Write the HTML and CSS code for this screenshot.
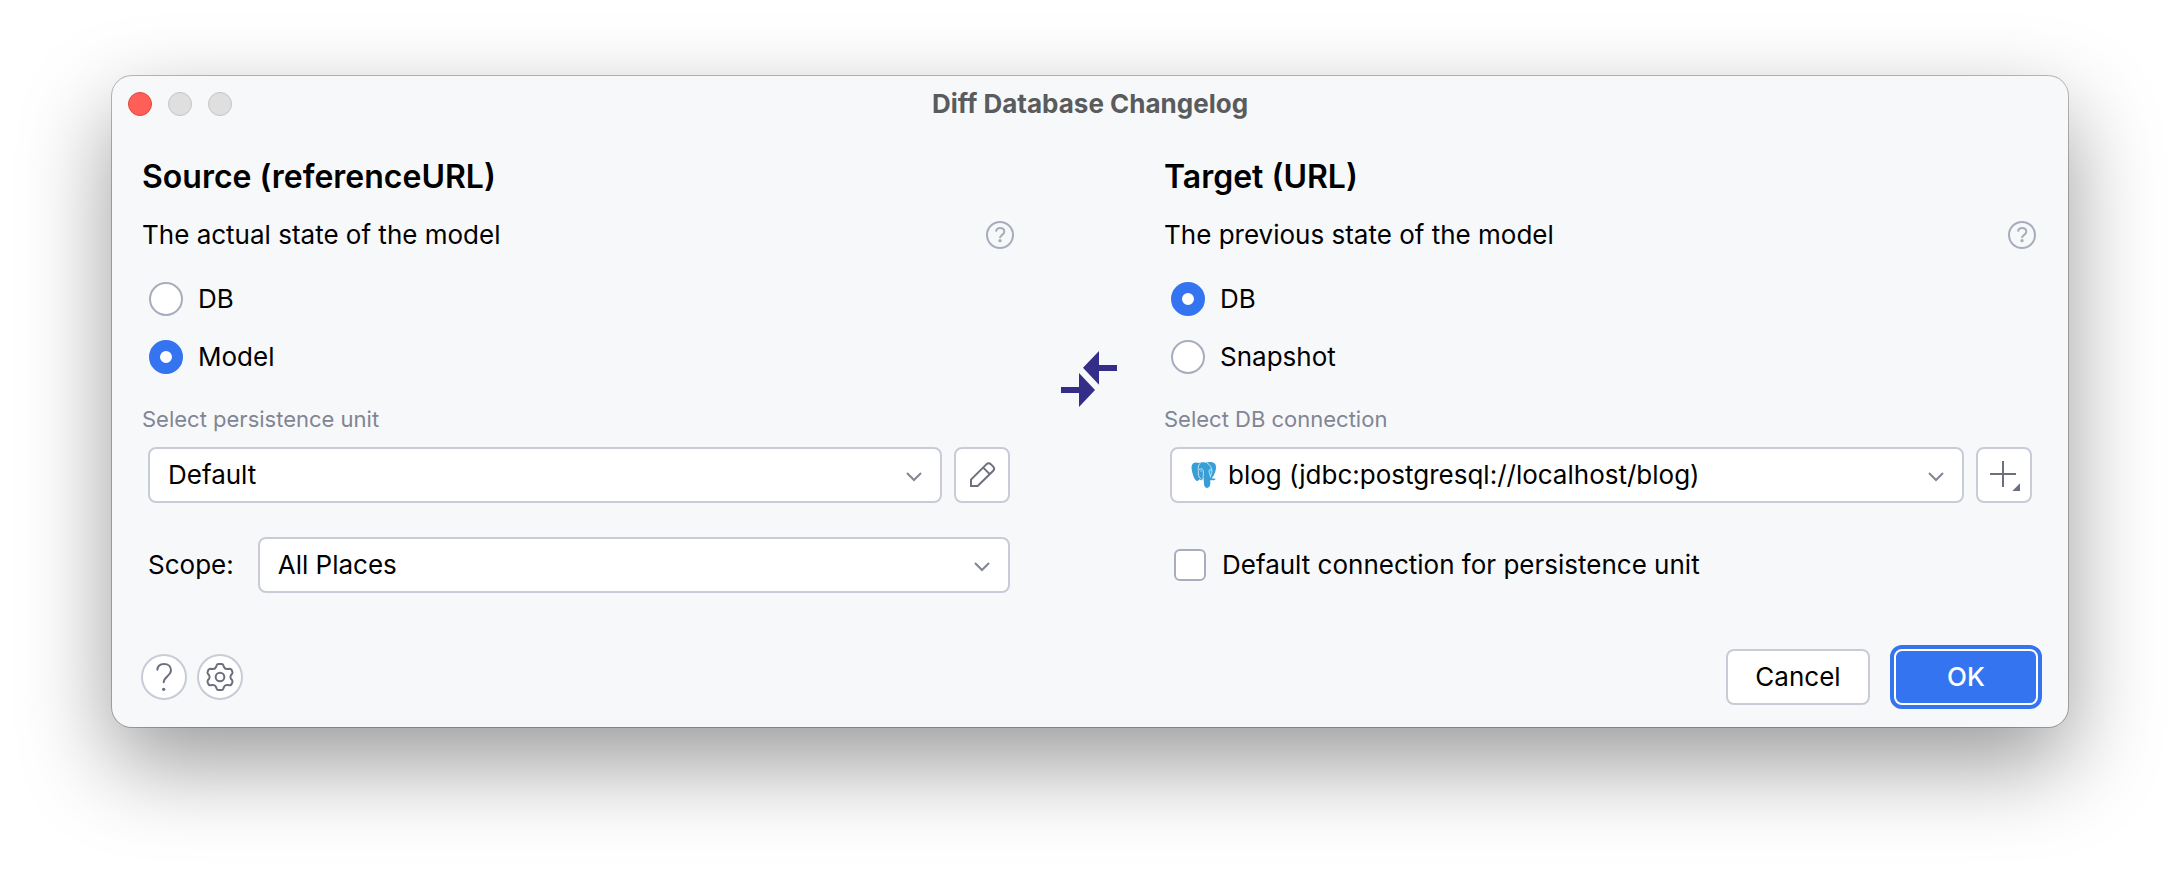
FILE: index.html
```html
<!DOCTYPE html>
<html lang="en">
<head>
<meta charset="utf-8">
<title>Diff Database Changelog</title>
<link rel="stylesheet" href="styles.css">
</head>
<body>
<main class="dialog" role="dialog" aria-labelledby="dialog-title">
  <header class="titlebar">
    <div class="lights">
      <button class="light light-close" type="button" aria-label="Close"></button>
      <button class="light" type="button" aria-label="Minimize" disabled></button>
      <button class="light" type="button" aria-label="Zoom" disabled></button>
    </div>
    <h1 class="title" id="dialog-title">Diff Database Changelog</h1>
  </header>

  <form class="form">
    <div class="columns">
      <section class="column">
        <h2 class="heading">Source (referenceURL)</h2>
        <div class="description">
          <p class="text">The actual state of the model</p>
          <button class="hint" type="button" aria-label="About the source">
            <svg class="hint-icon" viewBox="378 59 84 84" aria-hidden="true"><circle cx="420" cy="101" r="39"/><path d="M408 91C409 83 414 80 420 80C428 80 433 85 433 91C433 100 420 101 420 110"/><circle class="dot" cx="420" cy="118" r="5"/></svg>
          </button>
        </div>
        <div class="radios">
          <label class="choice"><input class="radio" type="radio" name="source">DB</label>
          <label class="choice"><input class="radio" type="radio" name="source" checked>Model</label>
        </div>
        <label class="caption" for="unit">Select persistence unit</label>
        <div class="row">
          <div class="combo">
            <select class="select" id="unit"><option>Default</option></select>
            <svg class="chevron" viewBox="0 0 16 10" aria-hidden="true"><path d="M1 1l7 7 7-7"/></svg>
          </div>
          <button class="square" type="button" aria-label="Edit persistence unit">
            <svg class="pencil" viewBox="324 780 84 84" aria-hidden="true"><path d="M333 855V836L379 790Q386 783 393 790L399 796Q406 803 399 810L353 855ZM369 799L390 820"/></svg>
          </button>
        </div>
        <div class="row row-scope">
          <label class="text" for="scope">Scope:</label>
          <div class="combo">
            <select class="select" id="scope"><option>All Places</option></select>
            <svg class="chevron" viewBox="0 0 16 10" aria-hidden="true"><path d="M1 1l7 7 7-7"/></svg>
          </div>
        </div>
      </section>

      <svg class="arrows" viewBox="606 450 168 168" aria-hidden="true"><path d="M672 500L720 450V492H774V510H720V551ZM606 558H660V516L708 567L660 618V576H606Z"/></svg>

      <section class="column">
        <h2 class="heading">Target (URL)</h2>
        <div class="description">
          <p class="text">The previous state of the model</p>
          <button class="hint" type="button" aria-label="About the target">
            <svg class="hint-icon" viewBox="378 59 84 84" aria-hidden="true"><circle cx="420" cy="101" r="39"/><path d="M408 91C409 83 414 80 420 80C428 80 433 85 433 91C433 100 420 101 420 110"/><circle class="dot" cx="420" cy="118" r="5"/></svg>
          </button>
        </div>
        <div class="radios">
          <label class="choice"><input class="radio" type="radio" name="target" checked>DB</label>
          <label class="choice"><input class="radio" type="radio" name="target">Snapshot</label>
        </div>
        <label class="caption" for="connection">Select DB connection</label>
        <div class="row">
          <div class="combo">
            <select class="select select-icon" id="connection"><option>blog (jdbc:postgresql://localhost/blog)</option></select>
            <svg class="elephant" viewBox="0 0 78 78" aria-hidden="true">
              <path class="skin" d="M2 12C4 0 16 0 24 3C30 0 38 0 44 2C54-1 68-1 73 7C78 17 73 32 66 44L61 49L74 50C72 55 64 56 58 53V64C58 82 40 82 39 66L38 50C34 56 28 56 26 52L21 56C14 60 8 47 4 32C2 24 1 18 2 12Z"/>
              <path class="crease" d="M29 3C22 7 21 16 22 25V36C22 43 26 48 31 51M48 3C58 8 62 17 63 27C62 35 58 41 58 46M24 24C29 18 36 20 37 27V36C37 42 34 45 38 50M62 24C57 20 54 23 54 29L58 42M28 27H33M56 27H59M38 50L32 53"/>
            </svg>
            <svg class="chevron" viewBox="0 0 16 10" aria-hidden="true"><path d="M1 1l7 7 7-7"/></svg>
          </div>
          <button class="square" type="button" aria-label="Add connection">
            <svg class="plus" viewBox="876 96 132 132" aria-hidden="true"><path d="M900 159H978M939 120V198"/><path class="corner" d="M990 187V210H967Z"/></svg>
          </button>
        </div>
        <label class="choice choice-box"><input class="checkbox" type="checkbox">Default connection for persistence unit</label>
      </section>
    </div>

    <footer class="footer">
      <button class="round" type="button" aria-label="Help">
        <svg class="glyph" viewBox="57 693 90 90" aria-hidden="true"><path d="M82 716C83 705 91 699 102 699C115 699 123 707 123 718C123 734 101 737 101 754"/><circle class="dot" cx="101" cy="775" r="5"/></svg>
      </button>
      <button class="round" type="button" aria-label="Settings">
        <svg class="glyph" viewBox="225 693 90 90" aria-hidden="true"><path d="M265 699H275Q279 699 280 703L282 708Q285 715 292 714L299 713Q303 713 305 717L307 722Q309 725 306 729L303 732Q299 738 303 744L306 747Q309 751 307 754L305 759Q303 763 299 763L292 762Q285 761 282 768L280 773Q279 777 275 777H265Q261 777 260 773L258 768Q255 761 248 762L241 763Q237 763 235 759L233 754Q231 751 234 747L237 744Q241 738 237 732L234 729Q231 725 233 722L235 717Q237 713 241 713L248 714Q255 715 258 708L260 703Q261 699 265 699Z"/><circle cx="270" cy="738" r="13"/></svg>
      </button>
      <div class="actions">
        <button class="button" type="button">Cancel</button>
        <button class="button button-primary" type="submit">OK</button>
      </div>
    </footer>
  </form>
</main>
</body>
</html>
```

FILE: styles.css
```css
* {
  box-sizing: border-box;
}

body {
  min-height: 100vh;
  margin: 0;
  padding: 76px 112px;
  background: #fff;
  color: #000;
  font: 400 26px/32px Inter, "Liberation Sans", sans-serif;
}

button,
select,
input {
  margin: 0;
  padding: 0;
  font: inherit;
  color: inherit;
}

h1,
h2,
p {
  margin: 0;
}

svg {
  display: block;
  fill: none;
}

.dialog {
  border-radius: 20px;
  background: #f7f8fa;
  box-shadow: 0 0 0 1px rgba(0, 0, 0, 0.25), 0 36px 90px rgba(0, 0, 0, 0.4);
}

.titlebar {
  display: grid;
  grid-template-columns: 1fr auto 1fr;
  align-items: center;
  height: 55px;
  padding: 0 16px;
}

.lights {
  display: flex;
  gap: 16px;
}

.light {
  width: 24px;
  height: 24px;
  border: 1px solid #c4c4c6;
  border-radius: 50%;
  background: #dfdfe0;
}

.light-close {
  border-color: #e2463f;
  background: #ff5f57;
}

.title {
  color: #5a5b5c;
  font-size: 26px;
  font-weight: 700;
}

.form {
  padding: 26px 30px 22px 29px;
}

.columns {
  display: grid;
  grid-template-columns: 1fr 56px 1fr;
  align-items: center;
  gap: 47px;
  padding: 0 2px 0 1px;
}

.heading {
  font-size: 32px;
  font-weight: 600;
  line-height: 40px;
}

.description {
  display: flex;
  align-items: center;
  justify-content: space-between;
  margin-top: 22px;
}

.hint {
  border: 0;
  background: none;
}

.hint-icon {
  width: 28px;
  height: 28px;
  stroke: #a8adbd;
  stroke-width: 6;
}

.hint-icon .dot {
  fill: #a8adbd;
  stroke: none;
}

.radios {
  display: grid;
  gap: 24px;
  margin: 31px 0 31px 7px;
}

.choice {
  display: flex;
  align-items: center;
  gap: 15px;
  line-height: 34px;
}

.radio {
  appearance: none;
  width: 34px;
  height: 34px;
  border: 2px solid #a8adbd;
  border-radius: 50%;
  background: #fff;
}

.radio:checked {
  border: 11px solid #3574f0;
}

.caption {
  display: block;
  color: #818594;
  font-size: 22px;
  line-height: 28px;
}

.row {
  display: flex;
  align-items: center;
  gap: 12px;
  margin: 14px 4px 0 6px;
}

.row-scope {
  gap: 24px;
  margin-top: 34px;
}

.combo {
  position: relative;
  flex: 1;
}

.select {
  appearance: none;
  display: block;
  width: 100%;
  height: 56px;
  padding: 0 56px 0 18px;
  border: 2px solid #c9ccd6;
  border-radius: 8px;
  background: #fff;
}

.select-icon {
  padding-left: 56px;
}

.chevron {
  position: absolute;
  top: 25px;
  right: 20px;
  width: 16px;
  height: 10px;
  stroke: #818594;
  stroke-width: 2;
  pointer-events: none;
}

.elephant {
  position: absolute;
  top: 15px;
  left: 21px;
  width: 26px;
  height: 26px;
  pointer-events: none;
}

.skin {
  fill: #389fd6;
}

.crease {
  stroke: #fff;
  stroke-width: 2;
}

.square {
  display: grid;
  place-items: center;
  width: 56px;
  height: 56px;
  border: 2px solid #c9ccd6;
  border-radius: 8px;
  background: #fff;
}

.pencil {
  width: 28px;
  height: 28px;
  stroke: #6c707e;
  stroke-width: 6;
}

.plus {
  width: 44px;
  height: 44px;
  stroke: #6c707e;
  stroke-width: 6;
}

.plus .corner {
  fill: #6c707e;
  stroke: none;
}

.choice-box {
  gap: 16px;
  height: 56px;
  margin: 34px 0 0 10px;
}

.checkbox {
  appearance: none;
  width: 32px;
  height: 32px;
  border: 2px solid #a8adbd;
  border-radius: 6px;
  background: #fff;
}

.arrows {
  width: 56px;
  height: 56px;
  margin-top: 8px;
  fill: #342e88;
}

.footer {
  display: flex;
  align-items: center;
  gap: 10px;
  margin-top: 56px;
}

.round {
  display: grid;
  place-items: center;
  width: 46px;
  height: 46px;
  border: 2px solid #c9ccd6;
  border-radius: 50%;
  background: #fff;
}

.glyph {
  width: 30px;
  height: 30px;
  stroke: #6c707e;
  stroke-width: 6;
  stroke-linecap: round;
}

.glyph .dot {
  fill: #6c707e;
  stroke: none;
}

.actions {
  display: flex;
  gap: 24px;
  margin-left: auto;
}

.button {
  width: 144px;
  height: 56px;
  border: 2px solid #c9ccd6;
  border-radius: 8px;
  background: #fff;
}

.button-primary {
  border-color: #fff;
  outline: 4px solid #3574f0;
  background: #3574f0;
  color: #fff;
  font-weight: 500;
}
```
